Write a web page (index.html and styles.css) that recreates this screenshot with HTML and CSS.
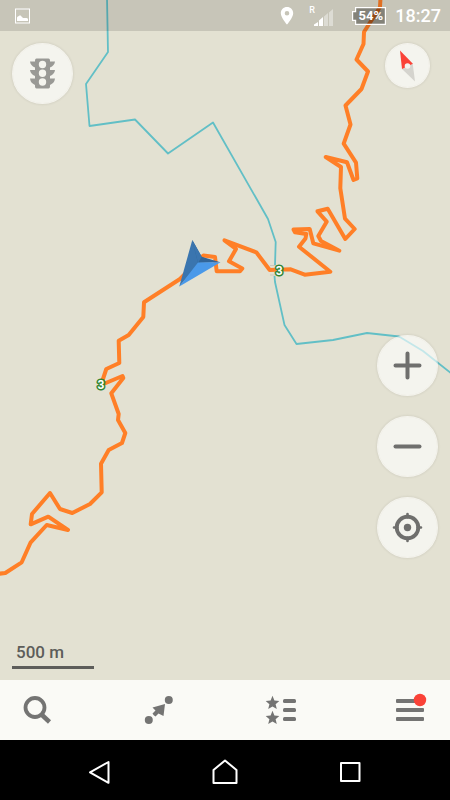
FILE: index.html
```html
<!DOCTYPE html>
<html lang="en">
<head>
<meta charset="utf-8">
<meta name="viewport" content="width=device-width, initial-scale=1">
<title>Map</title>
<link rel="stylesheet" href="styles.css">
</head>
<body>
<div class="screen">
  <main class="map">
    <svg class="map-canvas" viewBox="0 0 450 680" preserveAspectRatio="xMidYMin slice" aria-hidden="true">
      <polyline class="river" points="107,-2 108,52 86,84 89.5,126 135,119.5 168,153.5 213,122.5 268,219 275.7,242 275,265"/>
      <polyline class="river" points="274.5,276 275,282 284.5,325 296.5,344 333,340 367,333 399,336.500 423,351 452,374"/>
      <path class="bridge" d="M270 265.500h10M270 275h10"/>
      <polyline class="road" points="380.5,-2 380,7 364,32 363.5,44 356.500,59.5 368,71.5 361.5,89 345.500,105.5 350.500,124.5 343.7,143.7 356,162.7 357.300,178.500 353.5,180 347,162.3 325.700,157 341,167 340.3,188.3 345,218.7 354.700,229 345.3,239 327.7,208.700 317.500,211.3 326.700,221.700 318.300,236 321,241 339.3,250.700 313.3,243.3 309.700,229 293.5,229.500 295,232.3 306.300,234 305.500,238.5 299,246.7 330.3,271.7 304.7,274.700 290.7,269.3 269.7,270 256.3,252.3 224.5,240.3 236,249 229,261.3 242.3,268.5 240,271.3 216.7,271.3 215,257 203.5,255.5 180,279 144,302.3 143.3,317 128.7,335 118.7,340.7 119.3,363 106.3,369 101,385 122.5,376 123.3,378 111.3,393.3 118.7,414 118,420 125.3,433 122,443 108.7,450 101,463.7 101.7,492.3 90,504 72.3,513 60,509 50,493 32,514 30.700,524.3 48.300,516.7 68,530 46.700,525 30.7,542.3 21.7,562.3 5.3,573 -3,574"/>
      <text class="road-number" x="279.300" y="275">3</text>
      <text class="road-number" x="101" y="389">3</text>
      <path fill="#3a75af" d="M192.3 240L200 262.300 179.300 286.500Z"/>
      <path fill="#316599" d="M192.3 240L201.7 256.700 220.3 262.300 198 263Z"/>
      <path fill="#3a75af" d="M192.3 240L201.7 256.700 198 263Z"/>
      <path fill="#4a99e9" d="M198 262.500L220.500 262.300 179.300 286.500Z"/>
    </svg>

    <header class="status">
      <svg class="status-photo" width="16" height="16" viewBox="0 0 16 16" aria-hidden="true">
        <rect x="1.500" y="1" width="14" height="14" fill="none" stroke="#fff" stroke-width="1"/>
        <path fill="#fff" d="M3 13V9.500Q3.500 8 5 8Q6 6.500 7 8L9 10H11.500Q13.500 9.500 14 11V13Z"/>
      </svg>
      <svg class="status-pin" width="14" height="18" viewBox="0 0 14 18" aria-hidden="true">
        <path fill="#fff" fill-rule="evenodd" d="M7 0C3.500 0 .8 2.700.8 6.200C.8 10.500 7 17.500 7 17.500S13.200 10.500 13.200 6.200C13.200 2.700 10.500 0 7 0ZM7 4a2.300 2.300 0 1 1 0 4.600A2.300 2.300 0 0 1 7 4Z"/>
      </svg>
      <div class="signal">
        <span class="roaming">R</span>
        <svg width="19" height="18" viewBox="0 0 19 18" aria-hidden="true">
          <path fill="#fff" d="M0 18v-1.500L4 14v4ZM5 18v-5.500L9 9v9Z"/>
          <path fill="#fff" fill-opacity=".4" d="M10 18V8.500L14 5v13ZM15 18V4.500L19 1v17Z"/>
        </svg>
      </div>
      <div class="battery">
        <svg class="battery-shape" width="34" height="18" viewBox="0 0 34 18" aria-hidden="true">
          <path fill="#000" fill-opacity=".34" stroke="#fff" stroke-width="1.200" d="M3.600.6H33.400V17.400H3.600V13.400H.6V4.600H3.600Z"/>
        </svg>
        <span>54%</span>
      </div>
      <time class="clock">18:27</time>
    </header>

    <div class="map-ui">
      <div class="column">
        <button class="round" type="button" aria-label="Traffic">
          <svg width="25" height="31" viewBox="0.5 -0.5 25 31">
            <path fill="#999995" fill-rule="evenodd" d="M7 0H19Q20.500 0 20.500 2V3H25.500Q25 7 20.500 9V11.500H25.500Q25 15.500 20.500 17.500V20H25.500Q25 24.500 20.500 26.500V28Q20.500 30 19 30H7Q5.500 30 5.500 28V26.500Q1 24.500.5 20H5.500V17.500Q1 15.500.5 11.500H5.500V9Q1 7 .5 3H5.500V2Q5.500 0 7 0ZM13 2.300a3.700 3.700 0 1 0 0 7.400a3.700 3.700 0 0 0 0-7.400ZM13 11a3.700 3.700 0 1 0 0 7.400a3.700 3.700 0 0 0 0-7.400ZM13 19.800a3.700 3.700 0 1 0 0 7.400a3.700 3.700 0 0 0 0-7.400Z"/>
          </svg>
        </button>
        <div class="scale">500 m</div>
      </div>
      <div class="column column-right">
        <button class="round round-small" type="button" aria-label="Compass">
          <svg width="45" height="45" viewBox="0 0 45 45">
            <path fill="#d5d4ce" d="M27.700 20.500L30 38.500 17 26Z"/>
            <path fill="#fa4237" d="M15 7.500L27.900 20.800 17 26Z"/>
            <circle cx="22.500" cy="23" r="2.800" fill="#f4f3ee"/>
          </svg>
        </button>
        <div class="controls">
          <button class="round" type="button" aria-label="Zoom in">
            <svg width="29" height="29" viewBox="0 0 29 29"><path class="bar" d="M2.500 14.500H26.500M14.500 2.500V26.500"/></svg>
          </button>
          <button class="round" type="button" aria-label="Zoom out">
            <svg width="29" height="29" viewBox="0 0 29 29"><path class="bar" d="M2.500 14.500H26.500"/></svg>
          </button>
          <button class="round" type="button" aria-label="My position">
            <svg width="31" height="31" viewBox="-0.5 -0.5 31 31">
              <circle cx="15" cy="15" r="10.800" fill="none" stroke="#6f6f6d" stroke-width="3.800"/>
              <circle cx="15" cy="15" r="3.700" fill="#6f6f6d"/>
              <path fill="none" stroke="#6f6f6d" stroke-width="2.600" stroke-linecap="round" d="M15 1.500V5M15 25V28.500M1.500 15H5M25 15H28.500"/>
            </svg>
          </button>
        </div>
      </div>
    </div>
  </main>

  <nav class="tabs" aria-label="Main">
    <button type="button" aria-label="Search">
      <svg width="30" height="30" viewBox="0 0 30 30">
        <circle cx="13" cy="12.500" r="9.500" fill="none" stroke="#747473" stroke-width="3.800"/>
        <path stroke="#747473" stroke-width="4.500" d="M19.500 19.500L27.500 27"/>
      </svg>
    </button>
    <button type="button" aria-label="Route">
      <svg width="30" height="30" viewBox="0 0 30 30" fill="#747473">
        <circle cx="4.800" cy="25" r="4"/>
        <circle cx="24.800" cy="5" r="4"/>
        <path d="M21 9L8.500 12.500 11.500 15.500 8.500 18.500Q9.500 20.500 11.500 21.500L14.500 18.500 19.500 21Z"/>
      </svg>
    </button>
    <button type="button" aria-label="Bookmarks">
      <svg width="30" height="30" viewBox="0 0 30 30" fill="#747473">
        <path id="star" d="M6.500 .8L8.400 5.500 13.300 5.900 9.600 9.200 10.800 14 6.500 11.400 2.200 14 3.400 9.200 -.3 5.900 4.600 5.500Z"/>
        <use href="#star" y="15"/>
        <rect x="17" y="4" width="13" height="4" rx="1.500"/>
        <rect x="17" y="13" width="13" height="4" rx="1.500"/>
        <rect x="17" y="22" width="13" height="4" rx="1.500"/>
      </svg>
    </button>
    <button type="button" aria-label="Menu">
      <svg width="40" height="30" viewBox="0 0 40 30" fill="#747473">
        <rect x="8" y="4" width="28" height="4" rx="1"/>
        <rect x="8" y="13" width="28" height="4" rx="1"/>
        <rect x="8" y="22" width="28" height="4" rx="1"/>
        <circle cx="32" cy="5" r="6.200" fill="#fa4237"/>
      </svg>
    </button>
  </nav>

  <nav class="system" aria-label="System">
    <button type="button" aria-label="Back">
      <svg width="28" height="28" viewBox="0 0 28 28"><path d="M22.500 4L4 14.300 22.500 24.800Z"/></svg>
    </button>
    <button type="button" aria-label="Home">
      <svg width="28" height="28" viewBox="0 0 28 28"><path d="M2.500 25V12L14 2.500 25.500 12V25Z"/></svg>
    </button>
    <button type="button" aria-label="Recent apps">
      <svg width="28" height="28" viewBox="0 0 28 28"><rect x="5" y="5" width="18.500" height="18"/></svg>
    </button>
  </nav>
</div>
</body>
</html>
```
FILE: styles.css
```css
* {
  box-sizing: border-box;
}

body {
  margin: 0;
  font-family: Roboto, "Liberation Sans", sans-serif;
}

button {
  display: flex;
  align-items: center;
  justify-content: center;
  padding: 0;
  border: 0;
  background: none;
  cursor: pointer;
}

svg {
  display: block;
  flex: none;
}

.screen {
  display: flex;
  flex-direction: column;
  min-height: 100vh;
}

/* Map */
.map {
  position: relative;
  display: flex;
  flex: 1;
  flex-direction: column;
  isolation: isolate;
  background: #e3e1d2;
}

.map-canvas {
  position: absolute;
  inset: 0;
  z-index: -1;
  width: 100%;
  height: 100%;
}

.river {
  fill: none;
  stroke: #62bfc6;
  stroke-width: 1.8;
  stroke-linejoin: round;
}

.bridge {
  stroke: #c9c7bc;
  stroke-width: 1;
}

.road {
  fill: none;
  stroke: #ff7f27;
  stroke-width: 4;
  stroke-linejoin: round;
}

.road-number {
  fill: #fff;
  stroke: #318432;
  stroke-width: 3px;
  stroke-linejoin: round;
  paint-order: stroke;
  font-size: 12px;
  font-weight: 700;
  text-anchor: middle;
}

/* Status bar */
.status {
  display: flex;
  align-items: center;
  height: 31px;
  padding: 0 9px 0 14px;
  background: rgb(0 0 0 / 12%);
  color: #fff;
}

.status-pin {
  margin-left: auto;
}

.signal {
  display: flex;
  align-items: flex-end;
  height: 20px;
  margin: 0 19px 0 15px;
}

.roaming {
  align-self: flex-start;
  width: 5px;
  font-size: 9px;
  line-height: 9px;
  font-weight: 500;
}

.battery {
  display: grid;
  width: 34px;
  font-size: 13px;
  line-height: 18px;
  font-weight: 700;
  text-align: center;
}

.battery > * {
  grid-area: 1 / 1;
}

.battery span {
  padding-left: 3px;
}

.clock {
  margin-left: 9px;
  font-size: 18px;
  line-height: 24px;
  font-weight: 500;
}

/* Controls over the map */
.map-ui {
  display: flex;
  flex: 1;
  justify-content: space-between;
  padding: 12px 12px 11px;
}

.column {
  display: flex;
  flex-direction: column;
  justify-content: space-between;
}

.column-right {
  align-items: center;
  padding-bottom: 111px;
}

.controls {
  display: flex;
  flex-direction: column;
  gap: 20px;
}

.round {
  width: 61px;
  height: 61px;
  border: 1px solid rgb(255 255 255 / 60%);
  border-radius: 50%;
  background: rgb(255 255 255 / 62%);
  background-clip: padding-box;
  box-shadow: 0 0 3px rgb(0 0 0 / 12%);
}

.round-small {
  width: 45px;
  height: 45px;
}

.bar {
  fill: none;
  stroke: #6f6f6d;
  stroke-width: 4;
  stroke-linecap: round;
}

.scale {
  width: 82px;
  padding: 0 4px 4px;
  border-bottom: 3px solid #5d5d5a;
  color: #5d5d5a;
  font-size: 17px;
  line-height: 20px;
  font-weight: 500;
}

/* Bottom bars */
.tabs {
  display: flex;
  justify-content: space-between;
  height: 60px;
  padding: 0 22px;
  background: #fafaf6;
}

.tabs svg {
  overflow: visible;
}

.system {
  display: flex;
  justify-content: center;
  gap: 85px;
  height: 60px;
  background: #000;
}

.system button {
  width: 40px;
  padding-top: 4px;
}

.system svg {
  fill: none;
  stroke: #fff;
  stroke-width: 2;
  stroke-linejoin: round;
}
```
